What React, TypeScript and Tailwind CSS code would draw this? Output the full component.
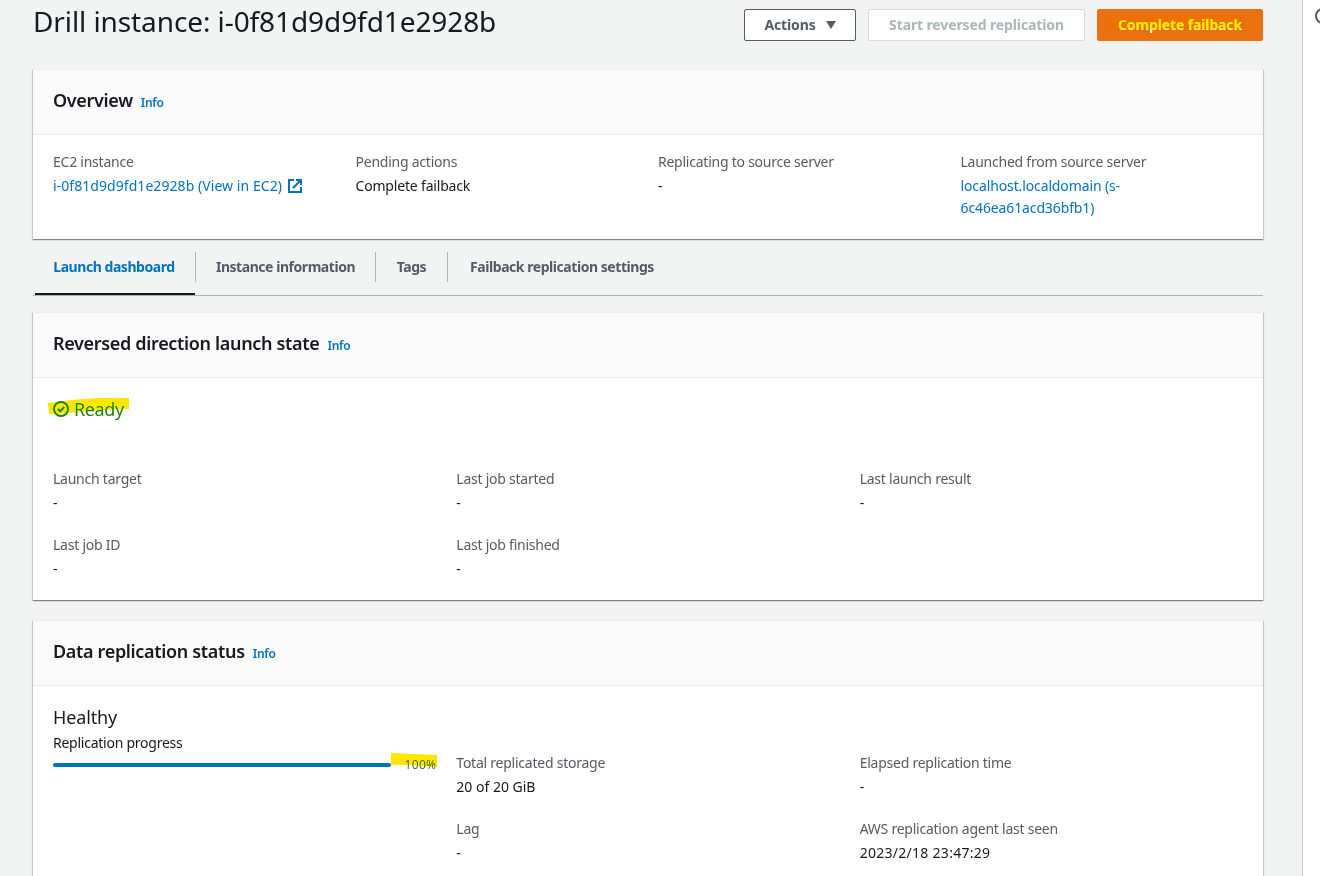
import type { ReactNode } from 'react';

type Field = { label: string; value: ReactNode };

const tabs = [
  { name: 'Launch dashboard', width: 'w-[163px]', active: true },
  { name: 'Instance information', width: 'w-[180px]' },
  { name: 'Tags', width: 'w-[72px]' },
  { name: 'Failback replication settings', width: 'w-[228px]' },
];

function ExternalIcon() {
  return (
    <svg className="ml-[5px] size-4 shrink-0" viewBox="0 0 16 16" fill="none" stroke="#0073bb" strokeWidth="2">
      <path d="M9 2h5v5M6 10l7.5-7.5M14 9v5H2V2h5" />
    </svg>
  );
}

function CheckIcon() {
  return (
    <svg className="size-4 shrink-0" viewBox="0 0 16 16" fill="none" stroke="#1d8102" strokeWidth="2">
      <circle cx="8" cy="8" r="7" />
      <path d="M4.8 8l2.3 2.3L11.3 6" />
    </svg>
  );
}

function Card({ title, className, children }: { title: string; className: string; children: ReactNode }) {
  return (
    <section
      className={`border-t border-[#eaeded] bg-white shadow-[0_1px_1px_0_rgba(0,28,36,0.3),1px_1px_1px_0_rgba(0,28,36,0.15),-1px_1px_1px_0_rgba(0,28,36,0.15)] ${className}`}
    >
      <header className="flex h-[65px] items-baseline gap-2 border-b border-[#eaeded] bg-[#fafafa] px-5 pt-[19px]">
        <h2 className="text-[18px] leading-[22px] font-semibold tracking-[-0.33px]">{title}</h2>
        <a className="text-[12px] leading-[16px] font-semibold tracking-[-0.25px] text-[#0073bb]">Info</a>
      </header>
      {children}
    </section>
  );
}

function FieldItem({ label, value }: Field) {
  return (
    <div>
      <div className="mb-0.5 tracking-[-0.24px] text-[#545b64]">{label}</div>
      <div>{value}</div>
    </div>
  );
}

export default function App() {
  return (
    <div className="flex h-[876px] w-[1320px] overflow-hidden bg-[#f2f3f3] font-['Noto_Sans','Open_Sans',sans-serif] text-[14px] leading-[22px] text-[#16191f]">
      <main className="w-[1302px] shrink-0 pr-[39px] pl-[33px]">
        <div className="flex h-[69px] items-start justify-between">
          <h1 className="mt-[3px] text-[28px] leading-9 tracking-[-0.09px] whitespace-nowrap">
            Drill instance: i-0f81d9d9fd1e2928b
          </h1>
          <div className="mt-[9px] flex gap-3 font-bold tracking-[-0.12px]">
            <button className="flex h-8 w-28 items-center justify-center rounded-[2px] border border-[#545b64] bg-white text-[#545b64]">
              Actions
              <svg className="ml-2.5 h-2 w-2.5" viewBox="0 0 10 8" fill="#545b64">
                <path d="M0 0h10L5 8z" />
              </svg>
            </button>
            <button className="h-8 w-[217px] rounded-[2px] border border-[#d5dbdb] bg-white whitespace-nowrap text-[#aab7b8]">
              Start reversed replication
            </button>
            <button className="relative h-8 w-[166px] rounded-[2px] bg-[#ec7211] whitespace-nowrap text-white">
              Complete failback
              <svg className="absolute top-1.5 left-2.5 h-4 w-[136px] mix-blend-darken" viewBox="0 0 136 16" fill="#ffe600">
                <path d="M0 3Q60 1 136 0V14Q60 14 0 15z" />
              </svg>
            </button>
          </div>
        </div>

        <Card title="Overview" className="h-[170px]">
          <div className="grid grid-cols-4 gap-x-5 px-5 pt-4">
            <FieldItem
              label="EC2 instance"
              value={
                <a className="flex items-center tracking-[0.06px] whitespace-nowrap text-[#0073bb]">
                  i-0f81d9d9fd1e2928b (View in EC2)
                  <ExternalIcon />
                </a>
              }
            />
            <FieldItem label="Pending actions" value={<span className="tracking-[-0.18px]">Complete failback</span>} />
            <FieldItem label="Replicating to source server" value="-" />
            <FieldItem
              label="Launched from source server"
              value={
                <a className="tracking-[-0.12px] text-[#0073bb]">
                  localhost.localdomain (s-
                  <br />
                  6c46ea61acd36bfb1)
                </a>
              }
            />
          </div>
        </Card>

        <nav className="mb-4 flex h-[57px] border-b border-[#aab7b8] pt-[13px]">
          {tabs.map((tab, i) => (
            <div key={tab.name} className={`relative h-[30px] shrink-0 ${tab.width}`}>
              <div
                className={`flex h-[30px] items-center justify-center font-bold tracking-[-0.45px] whitespace-nowrap ${
                  tab.active ? 'text-[#0073bb]' : 'text-[#545b64]'
                } ${i < tabs.length - 1 ? 'border-r border-[#aab7b8]' : ''}`}
              >
                {tab.name}
              </div>
              {tab.active && <div className="absolute top-[41px] left-0.5 h-0.5 w-40 bg-[#16191f]" />}
            </div>
          ))}
        </nav>

        <Card title="Reversed direction launch state" className="mb-5 h-[288px]">
          <div className="px-5 pt-5">
            <div className="relative mb-12 flex items-center gap-[5px] text-[18px] tracking-[-0.4px] text-[#1d8102]">
              <CheckIcon />
              Ready
              <svg className="absolute -top-px -left-[5px] h-[18px] w-[82px] mix-blend-darken" viewBox="0 0 82 18" fill="#ffe600">
                <path d="M0 6Q40 0 81 1V12Q50 13 25 15.5Q10 17 1 17z" />
              </svg>
            </div>
            <div className="grid grid-cols-3 gap-x-5 gap-y-5">
              <FieldItem label="Launch target" value="-" />
              <FieldItem label="Last job started" value="-" />
              <FieldItem label="Last launch result" value="-" />
              <FieldItem label="Last job ID" value="-" />
              <FieldItem label="Last job finished" value="-" />
            </div>
          </div>
        </Card>

        <Card title="Data replication status" className="h-[300px]">
          <div className="px-5 pt-5">
            <div className="mb-1 text-[18px] tracking-[-0.15px]">Healthy</div>
            <div className="grid grid-cols-3 gap-x-5">
              <div>
                <div className="tracking-[-0.25px]">Replication progress</div>
                <div className="flex h-[22px] items-center">
                  <div className="h-1 w-[338px] rounded-full bg-[#0073bb]" />
                  <div className="relative flex-1 text-right text-[12px] tracking-[0.3px] text-[#545b64]">
                    100%
                    <svg className="absolute -top-px left-0 h-4 w-[47px] mix-blend-darken" viewBox="0 0 47 16" fill="#ffe600">
                      <path d="M0 0Q24 1 46 2V14L20 12L0 12z" />
                    </svg>
                  </div>
                </div>
              </div>
              <div className="space-y-5 pt-5">
                <FieldItem label="Total replicated storage" value="20 of 20 GiB" />
                <FieldItem label="Lag" value="-" />
              </div>
              <div className="space-y-5 pt-5">
                <FieldItem label="Elapsed replication time" value="-" />
                <FieldItem
                  label="AWS replication agent last seen"
                  value={<span className="tracking-[0.28px]">2023/2/18 23:47:29</span>}
                />
              </div>
            </div>
          </div>
        </Card>
      </main>

      <aside className="w-[18px] shrink-0 overflow-hidden border-l border-[#c5cbcb] bg-white pt-2 pl-3">
        <svg className="size-4" viewBox="0 0 16 16" fill="none" stroke="#545b64" strokeWidth="2">
          <circle cx="8" cy="8" r="7" />
        </svg>
      </aside>
    </div>
  );
}
